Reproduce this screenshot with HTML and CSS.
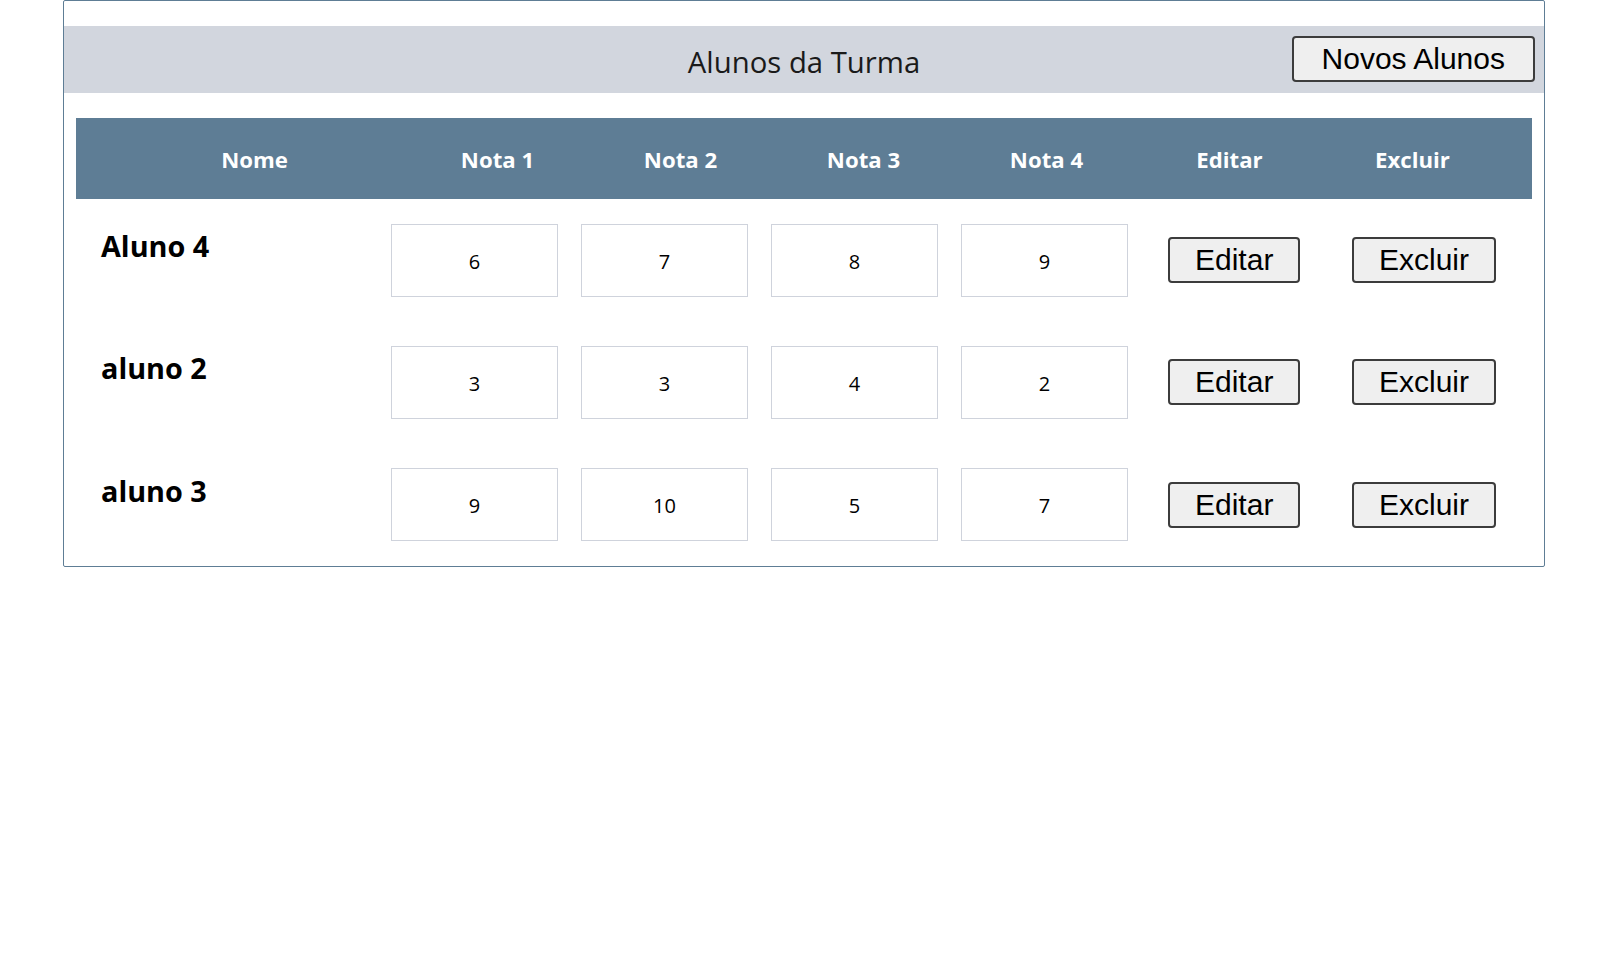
FILE: index.html
```html
<!DOCTYPE html>
<html lang="pt-BR">
<head>
<meta charset="utf-8">
<title>Alunos da Turma</title>
<link rel="stylesheet" href="styles.css">
</head>
<body>
<div class="card">
  <div class="band">
    <span></span>
    <h1 class="title">Alunos da Turma</h1>
    <button class="btn btn-new">Novos Alunos</button>
  </div>
  <div class="table">
    <div class="thead">
      <div class="th th-name">Nome</div>
      <div class="th">Nota 1</div>
      <div class="th">Nota 2</div>
      <div class="th">Nota 3</div>
      <div class="th">Nota 4</div>
      <div class="th">Editar</div>
      <div class="th">Excluir</div>
    </div>
    <div class="row">
      <div class="name">Aluno 4</div>
      <input class="grade" value="6">
      <input class="grade" value="7">
      <input class="grade" value="8">
      <input class="grade" value="9">
      <button class="btn">Editar</button>
      <button class="btn">Excluir</button>
    </div>
    <div class="row">
      <div class="name">aluno 2</div>
      <input class="grade" value="3">
      <input class="grade" value="3">
      <input class="grade" value="4">
      <input class="grade" value="2">
      <button class="btn">Editar</button>
      <button class="btn">Excluir</button>
    </div>
    <div class="row">
      <div class="name">aluno 3</div>
      <input class="grade" value="9">
      <input class="grade" value="10">
      <input class="grade" value="5">
      <input class="grade" value="7">
      <button class="btn">Editar</button>
      <button class="btn">Excluir</button>
    </div>
  </div>
</div>
</body>
</html>
```

FILE: styles.css
```css
* { box-sizing: border-box; }

body {
  margin: 0;
  background: #ffffff;
  font-family: "Open Sans", "Noto Sans", sans-serif;
  color: #000;
}

.card {
  margin: 0 61px 0 63px;
  border: 1px solid #5e7d95;
  border-radius: 2px;
  padding-top: 25px;
  height: 567px;
}

.band {
  display: grid;
  grid-template-columns: 1fr auto 1fr;
  align-items: center;
  height: 67px;
  background: #d2d6de;
}

.title {
  margin: 6px 0 0;
  font-size: 29.3px;
  font-weight: 400;
  color: #1a1a1a;
  line-height: 1.362;
}

.btn {
  font-family: "Liberation Sans", Arial, sans-serif;
  font-size: 30px;
  line-height: normal;
  color: #000;
  background: #efefef;
  border: 2px solid #3c3c3c;
  border-radius: 4px;
  padding: 4px 25px;
  justify-self: start;
}

.btn-new {
  justify-self: end;
  padding: 4px 28px;
  margin: 0 9px 2px 0;
}

.table {
  margin: 25px 12px 0;
}

.thead {
  display: grid;
  grid-template-columns: 330px repeat(6, 183px);
  align-items: center;
  height: 81px;
  padding-top: 4px;
  background: #5e7d95;
}

.th {
  text-align: center;
  color: #ffffff;
  font-weight: 700;
  font-size: 22.2px;
  line-height: 1.362;
}

.th-name {
  padding-left: 27px;
}

.row {
  display: grid;
  grid-template-columns: 290px 190px 190px 190px 207px 184px auto;
  align-items: center;
  height: 122.33px;
  padding-left: 25px;
}

.name {
  align-self: start;
  padding-top: 27px;
  font-size: 28.8px;
  font-weight: 700;
  line-height: 1.362;
}

.grade {
  width: 167px;
  height: 73px;
  border: 1px solid #cfd3dc;
  border-radius: 0;
  padding: 2px 0 0;
  text-align: center;
  font-family: "Open Sans", "Noto Sans", sans-serif;
  font-size: 20px;
  color: #000;
  background: #fff;
  outline: none;
}
```
